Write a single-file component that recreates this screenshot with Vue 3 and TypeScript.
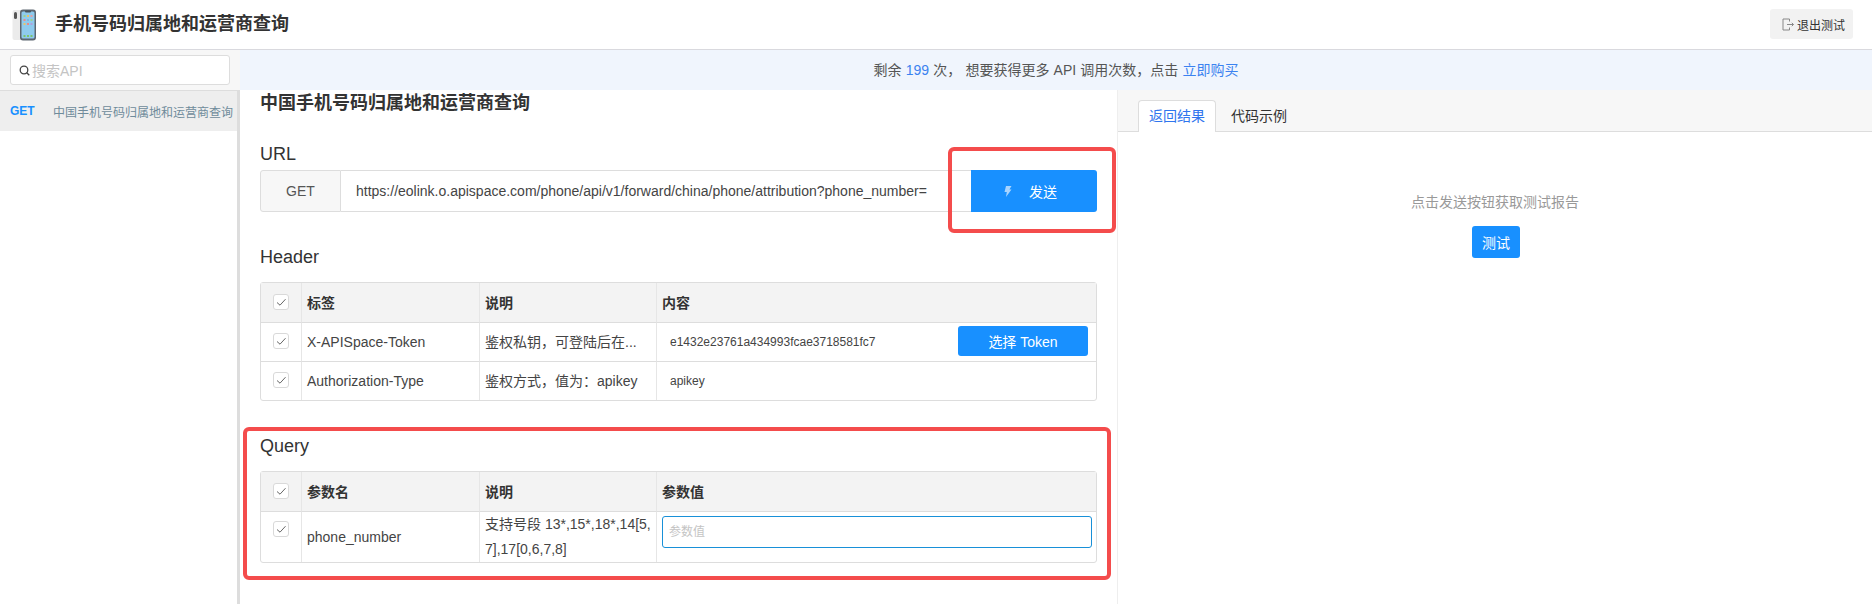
<script setup lang="ts">
const headerRows = [
  { name: 'X-APISpace-Token', desc: '鉴权私钥，可登陆后在...', value: 'e1432e23761a434993fcae3718581fc7', token: true },
  { name: 'Authorization-Type', desc: '鉴权方式，值为：apikey', value: 'apikey', token: false },
]
</script>

<template>
  <div class="page">
    <header class="topbar">
      <div class="brand">
        <svg class="logo" width="26" height="32" viewBox="0 0 26 32">
          <rect x="0.5" y="1" width="12" height="30" rx="2" fill="#ebebeb" />
          <rect x="2" y="3" width="3" height="7" rx="1.5" fill="#555" />
          <rect x="8" y="0.5" width="16" height="31" rx="3" fill="#5d6670" />
          <rect x="9.5" y="2.5" width="13" height="27" rx="1.5" fill="#8fcbee" />
          <rect x="13" y="1.5" width="6" height="2" rx="1" fill="#4a525a" />
          <rect x="11.5" y="6" width="2" height="2" fill="#9ed28c" />
          <rect x="15" y="6" width="2" height="2" fill="#e9c46a" />
          <rect x="18.5" y="6" width="2" height="2" fill="#e8a0a0" />
          <rect x="11.5" y="10" width="2" height="2" fill="#e88a8a" />
          <rect x="15" y="10" width="2" height="2" fill="#7fb8e0" />
          <rect x="18.5" y="10" width="2" height="2" fill="#9ed28c" />
          <rect x="11.5" y="14" width="2" height="2" fill="#e9c46a" />
          <rect x="15" y="14" width="2" height="2" fill="#e88a8a" />
          <rect x="18.5" y="14" width="2" height="2" fill="#b49fdc" />
          <rect x="11.5" y="26" width="2" height="2" fill="#7cc46c" />
          <rect x="15" y="26" width="2" height="2" fill="#7cc46c" />
          <rect x="18.5" y="26" width="2" height="2" fill="#7cc46c" />
        </svg>
        <span class="brand-title">手机号码归属地和运营商查询</span>
      </div>
      <button class="exit-btn">
        <svg width="12" height="13" viewBox="0 0 12 13" fill="none" stroke="#888" stroke-width="1">
          <path d="M7.5 3.5V1H1V12H7.5V9.5" />
          <path d="M5 6.5H11.5M9.8 4.8L11.5 6.5L9.8 8.2" />
        </svg>
        <span>退出测试</span>
      </button>
    </header>

    <div class="body">
      <aside class="sidebar">
        <div class="search-wrap">
          <div class="search">
            <svg width="11" height="11" viewBox="0 0 11 11" fill="none" stroke="#444" stroke-width="1.3">
              <circle cx="5" cy="5" r="3.8" />
              <path d="M7.8 7.8L10.3 10.3" />
            </svg>
            <span class="search-ph">搜索API</span>
          </div>
        </div>
        <div class="api-item">
          <span class="api-method">GET</span>
          <span class="api-name">中国手机号码归属地和运营商查询</span>
        </div>
      </aside>

      <div class="content">
        <div class="notice">
          剩余 <a class="link">199</a> 次， 想要获得更多 API 调用次数，点击 <a class="link">立即购买</a>
        </div>

        <div class="panels">
          <main class="main">
            <h1 class="api-title">中国手机号码归属地和运营商查询</h1>

            <h2 class="label label-url">URL</h2>
            <div class="url-row">
              <div class="url-method">GET</div>
              <div class="url-text">https://eolink.o.apispace.com/phone/api/v1/forward/china/phone/attribution?phone_number=</div>
              <button class="send-btn">
                <svg width="9" height="11" viewBox="0 0 9 11"><path d="M3 0H8.5L6.4 3.6H8.5L3 11L3.8 6H1.5Z" fill="#a8d4ff" /></svg>
                <span>发送</span>
              </button>
            </div>

            <h2 class="label label-header">Header</h2>
            <table class="grid">
              <colgroup><col class="c1" /><col class="c2" /><col class="c3" /><col /></colgroup>
              <thead>
                <tr>
                  <th><span class="check"><svg width="14" height="14" viewBox="0 0 14 14"><path d="M3 7.5L6 10.2L11.5 4.2" fill="none" stroke="#666" /></svg></span></th>
                  <th>标签</th>
                  <th>说明</th>
                  <th>内容</th>
                </tr>
              </thead>
              <tbody>
                <tr v-for="row in headerRows" :key="row.name">
                  <td><span class="check"><svg width="14" height="14" viewBox="0 0 14 14"><path d="M3 7.5L6 10.2L11.5 4.2" fill="none" stroke="#666" /></svg></span></td>
                  <td>{{ row.name }}</td>
                  <td>{{ row.desc }}</td>
                  <td>
                    <div class="value-cell">
                      <span class="value">{{ row.value }}</span>
                      <button v-if="row.token" class="token-btn">选择 Token</button>
                    </div>
                  </td>
                </tr>
              </tbody>
            </table>

            <h2 class="label label-query">Query</h2>
            <table class="grid">
              <colgroup><col class="c1" /><col class="c2" /><col class="c3" /><col /></colgroup>
              <thead>
                <tr>
                  <th><span class="check"><svg width="14" height="14" viewBox="0 0 14 14"><path d="M3 7.5L6 10.2L11.5 4.2" fill="none" stroke="#666" /></svg></span></th>
                  <th>参数名</th>
                  <th>说明</th>
                  <th>参数值</th>
                </tr>
              </thead>
              <tbody>
                <tr class="query-row">
                  <td class="top"><span class="check"><svg width="14" height="14" viewBox="0 0 14 14"><path d="M3 7.5L6 10.2L11.5 4.2" fill="none" stroke="#666" /></svg></span></td>
                  <td>phone_number</td>
                  <td class="wrap">支持号段 13*,15*,18*,14[5,7],17[0,6,7,8]</td>
                  <td class="top input-cell"><div class="param-input">参数值</div></td>
                </tr>
              </tbody>
            </table>

            <div class="mark mark-send"></div>
            <div class="mark mark-query"></div>
          </main>

          <section class="result">
            <div class="tabs">
              <div class="tab active">返回结果</div>
              <div class="tab">代码示例</div>
            </div>
            <div class="result-body">
              <p class="hint">点击发送按钮获取测试报告</p>
              <button class="test-btn">测试</button>
            </div>
          </section>
        </div>
      </div>
    </div>
  </div>
</template>

<style>
html, body { margin: 0; background: #fff; }
</style>

<style scoped>
.page {
  width: 1872px;
  height: 604px;
  overflow: hidden;
  font-family: "Liberation Sans", "Noto Sans CJK SC", sans-serif;
  font-size: 14px;
  color: #333;
  display: flex;
  flex-direction: column;
}
button { font-family: inherit; border: 0; padding: 0; }

.topbar {
  height: 49px;
  flex: none;
  border-bottom: 1px solid #d9d9de;
  display: flex;
  justify-content: space-between;
  align-items: center;
  padding: 0 19px 0 12px;
}
.brand { display: flex; align-items: center; gap: 17px; }
.logo { display: block; margin-top: 1px; }
.brand-title { font-size: 18px; font-weight: 700; color: #333; margin-bottom: 6px; }
.exit-btn {
  width: 83px;
  height: 30px;
  margin-top: -1px;
  padding-left: 4px;
  background: #f2f2f2;
  border-radius: 3px;
  font-size: 12px;
  color: #333;
  display: flex;
  align-items: center;
  justify-content: center;
  gap: 3px;
}

.body { flex: 1; display: flex; min-height: 0; }

.sidebar { width: 240px; flex: none; display: flex; flex-direction: column; border-right: 3px solid #ddd; box-sizing: border-box; }
.search-wrap {
  height: 41px;
  box-sizing: border-box;
  margin-right: -3px;
  background: #f7f7f7;
  border-bottom: 1px solid #ddd;
  padding: 5px 10px 0 10px;
  position: relative;
}
.search {
  height: 30px;
  box-sizing: border-box;
  background: #fff;
  border: 1px solid #ddd;
  border-radius: 3px;
  display: flex;
  align-items: center;
  gap: 2px;
  padding-left: 8px;
}
.search-ph { color: #c4c4c4; font-size: 14px; }
.api-item {
  height: 40px;
  background: #eee;
  display: flex;
  align-items: center;
  padding-left: 10px;
}
.api-method { width: 43px; font-size: 12px; font-weight: 700; color: #1890ff; }
.api-name { font-size: 12px; color: #6f8b9b; white-space: nowrap; }

.content { flex: 1; min-width: 0; display: flex; flex-direction: column; }
.notice {
  height: 40px;
  flex: none;
  box-sizing: border-box;
  background: #f0f5fd;
  color: #555;
  text-align: center;
  line-height: 40px;
  word-spacing: 0.3px;
}
.link { color: #3b82f0; }

.panels { flex: 1; display: flex; min-height: 0; }

.main {
  width: 878px;
  flex: none;
  box-sizing: border-box;
  padding: 0 20px;
  border-right: 1px solid #eee;
  position: relative;
}
.api-title { margin: 0; font-size: 18px; line-height: 26px; font-weight: 700; color: #333; }
.label { margin: 0; font-size: 18px; line-height: 24px; font-weight: 400; color: #333; }
.label-url { margin: 26px 0 4px; }
.label-header { margin: 33px 0 13px; }
.label-query { margin: 33px 0 13px; }

.url-row {
  height: 42px;
  box-sizing: border-box;
  display: flex;
  align-items: stretch;
}
.url-method {
  width: 81px;
  box-sizing: border-box;
  background: #f7f7f7;
  border: 1px solid #ddd;
  border-radius: 3px 0 0 3px;
  display: flex;
  align-items: center;
  justify-content: center;
  color: #555;
}
.url-text {
  flex: 1;
  min-width: 0;
  border: 1px solid #ddd;
  border-left: 0;
  border-right: 0;
  display: flex;
  align-items: center;
  padding-left: 15px;
  white-space: nowrap;
  overflow: hidden;
  color: #444;
}
.send-btn {
  width: 126px;
  background: #1890ff;
  color: #fff;
  border-radius: 0 3px 3px 0;
  font-size: 14px;
  display: flex;
  align-items: center;
  justify-content: center;
  gap: 17px;
  padding-right: 8px;
}

.grid {
  width: 837px;
  table-layout: fixed;
  border-collapse: separate;
  border-spacing: 0;
  border: 1px solid #ddd;
  border-radius: 3px;
  color: #333;
}
.c1 { width: 40px; }
.c2 { width: 178px; }
.c3 { width: 177px; }
.grid th, .grid td {
  padding: 0 5px;
  border-left: 1px solid #e6e6e6;
  border-bottom: 1px solid #ddd;
  text-align: left;
  font-size: 14px;
  vertical-align: middle;
  line-height: 20px;
  box-sizing: border-box;
}
.grid th:first-child, .grid td:first-child { border-left: 0; padding: 0; }
.grid tr:last-child td { border-bottom: 0; }
.grid th { background: #f3f3f3; height: 40px; font-weight: 700; }
.grid td { height: 39px; color: #444; }
.grid tbody tr:last-child td { height: 38px; }
.grid td.wrap { line-height: 25px; word-break: break-all; padding-right: 2px; }
.grid .query-row td { height: 49px; }
.grid td.top { vertical-align: top; }
.grid .query-row td.top:first-child { padding-top: 9px; }
.grid td.input-cell { padding: 4px 4px 0 5px; }

.check {
  display: flex;
  align-items: center;
  justify-content: center;
  width: 16px;
  height: 16px;
  margin: -2px auto 0;
  box-sizing: border-box;
  background: #fff;
  border: 1px solid #d9d9d9;
  border-radius: 3px;
}
.grid th .check { margin-top: -1px; }
.grid td.top .check { margin-top: 0; }

.value-cell {
  display: flex;
  align-items: center;
  justify-content: space-between;
  padding: 0 3px 0 8px;
}
.value { font-size: 12px; color: #444; }
.token-btn {
  width: 130px;
  height: 30px;
  margin-top: -2px;
  background: #1890ff;
  color: #fff;
  font-size: 14px;
  border-radius: 3px;
}
.param-input {
  height: 32px;
  box-sizing: border-box;
  border: 1px solid #1890d8;
  border-radius: 3px;
  padding-left: 6px;
  font-size: 12px;
  line-height: 30px;
  color: #c4c4c4;
}

.mark {
  position: absolute;
  box-sizing: border-box;
  border: 4px solid #f44c4c;
  border-radius: 6px;
  pointer-events: none;
}
.mark-send { left: 708px; top: 57px; width: 168px; height: 86px; }
.mark-query { left: 3px; top: 337px; width: 868px; height: 153px; }

.result { flex: 1; min-width: 0; display: flex; flex-direction: column; }
.tabs {
  height: 42px;
  box-sizing: border-box;
  background: #f7f7f7;
  border-bottom: 1px solid #ddd;
  padding: 10px 0 0 20px;
  display: flex;
  align-items: flex-start;
}
.tab {
  height: 32px;
  box-sizing: border-box;
  line-height: 30px;
  color: #333;
  padding: 0 10px;
  border: 1px solid transparent;
  border-bottom: 0;
  border-radius: 4px 4px 0 0;
  margin-right: 4px;
}
.tab.active { background: #fff; color: #2f75ee; border-color: #ddd; }
.result-body { display: flex; flex-direction: column; align-items: center; padding-top: 59px; }
.hint { margin: 0; line-height: 22px; color: #999; }
.test-btn {
  margin-top: 13px;
  margin-left: 2px;
  width: 48px;
  height: 32px;
  background: #1890ff;
  color: #fff;
  font-size: 14px;
  border-radius: 3px;
}
</style>
